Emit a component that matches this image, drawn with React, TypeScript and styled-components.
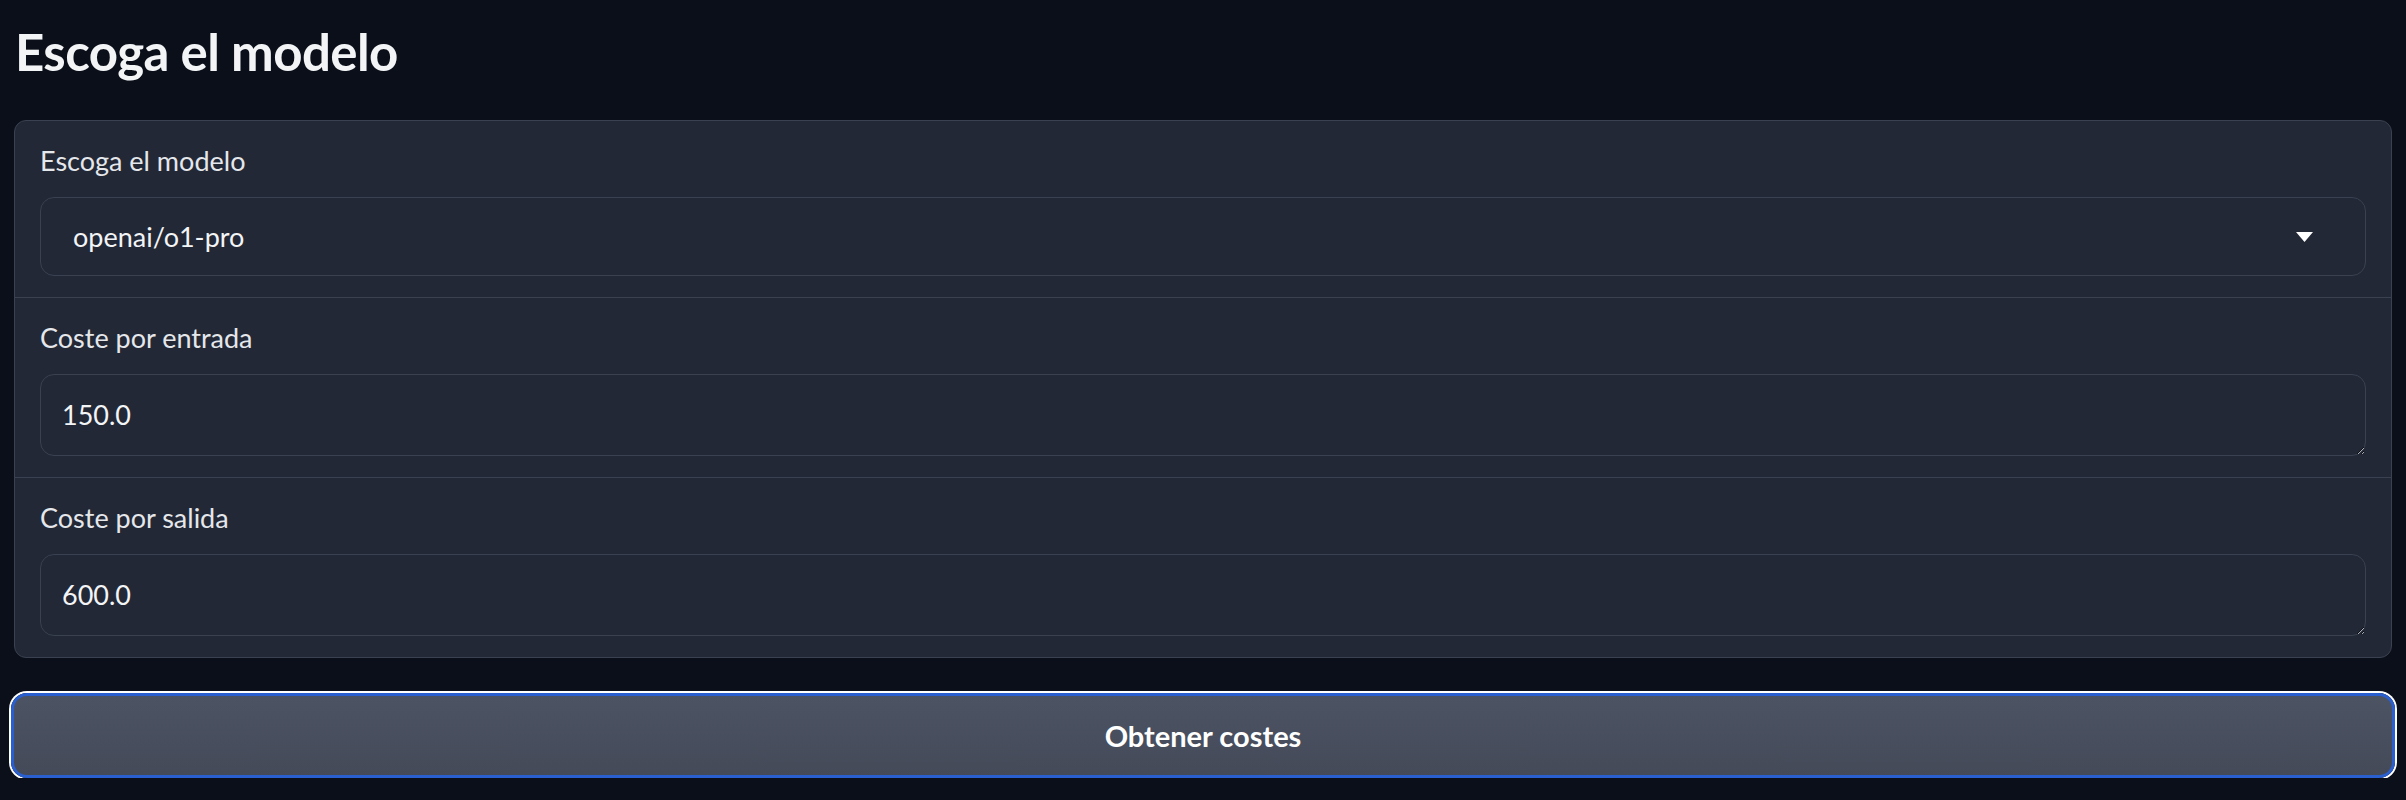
import styled, { createGlobalStyle } from 'styled-components'

const GlobalStyle = createGlobalStyle`
  html, body {
    margin: 0;
    padding: 0;
    background: #0b0f19;
    color-scheme: dark;
  }
  body {
    font-family: Lato, "Noto Sans", sans-serif;
  }
`

const Page = styled.div`
  padding: 10px 14px 0 14px;
  display: flex;
  flex-direction: column;
`

const Title = styled.h1`
  margin: 0 0 0 1px;
  font-size: 51px;
  line-height: 84px;
  font-weight: 700;
  color: #f3f4f6;
  letter-spacing: -0.6px;
`

const Panel = styled.div`
  margin-top: 26px;
  background: #222836;
  border: 1px solid #3a4150;
  border-radius: 12px;
  display: flex;
  flex-direction: column;
  overflow: hidden;
`

const Field = styled.div`
  padding: 21px 25px 21px 25px;
  display: flex;
  flex-direction: column;
  gap: 17px;
  & + & {
    border-top: 1px solid #3a4150;
  }
`

const Label = styled.span`
  font-size: 27px;
  line-height: 38px;
  color: #e5e7eb;
`

const Select = styled.div`
  height: 79px;
  box-sizing: border-box;
  border: 1px solid #3a4150;
  border-radius: 14px;
  background: #222836;
  display: flex;
  align-items: center;
  justify-content: space-between;
  padding: 0 52px 0 32px;
  font-size: 27px;
  color: #f3f4f6;
`

const Arrow = styled.svg`
  width: 17px;
  height: 10px;
  fill: #ffffff;
`

const TextBox = styled.textarea`
  height: 82px;
  box-sizing: border-box;
  border: 1px solid #3a4150;
  border-radius: 14px;
  background: #222836;
  color: #f3f4f6;
  font-family: Lato, "Noto Sans", sans-serif;
  font-size: 27px;
  line-height: 38px;
  padding: 21px 21px;
  outline: none;
  resize: vertical;
  color-scheme: dark;
`

const Button = styled.button`
  margin: 35px -3px 0 -3px;
  height: 85px;
  border-radius: 16px;
  border: 3px solid #2a5fcf;
  box-shadow: 0 0 0 2px #ffffff;
  background: linear-gradient(to bottom, #4c5363, #444a58);
  color: #ffffff;
  font-family: Lato, "Noto Sans", sans-serif;
  font-size: 29px;
  font-weight: 700;
  cursor: pointer;
`

export default function App() {
  return (
    <>
      <GlobalStyle />
      <Page>
        <Title>Escoga el modelo</Title>
        <Panel>
          <Field>
            <Label>Escoga el modelo</Label>
            <Select>
              <span>openai/o1-pro</span>
              <Arrow viewBox="0 0 17 10">
                <path d="M0 0 L17 0 L8.5 10 Z" />
              </Arrow>
            </Select>
          </Field>
          <Field>
            <Label>Coste por entrada</Label>
            <TextBox defaultValue="150.0" rows={1} />
          </Field>
          <Field>
            <Label>Coste por salida</Label>
            <TextBox defaultValue="600.0" rows={1} />
          </Field>
        </Panel>
        <Button>Obtener costes</Button>
      </Page>
    </>
  )
}
